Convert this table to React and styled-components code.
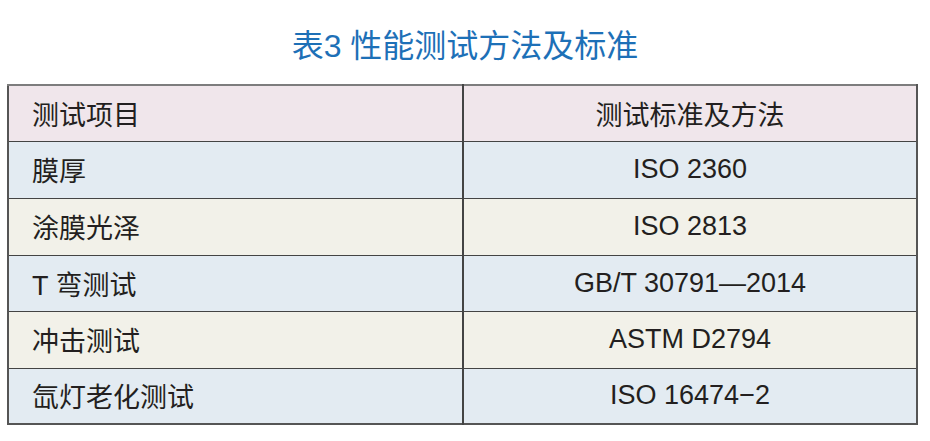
import React from "react";
import styled, { createGlobalStyle } from "styled-components";

const Global = createGlobalStyle`
  html, body { margin: 0; padding: 0; background: #ffffff; }
  body { font-family: "Liberation Sans", "Noto Sans CJK SC", sans-serif; }
`;

const Page = styled.div`
  width: 930px;
  height: 441px;
  background: #fff;
  display: flex;
  flex-direction: column;
  align-items: stretch;
`;

const Title = styled.h1`
  margin: 0;
  padding-top: 27px;
  height: 84px;
  flex-shrink: 0;
  box-sizing: border-box;
  text-align: center;
  font-family: "Liberation Sans", "Noto Sans CJK SC", sans-serif;
  font-weight: 400;
  font-size: 32px;
  line-height: 38px;
  color: #1d70b7;
  letter-spacing: 0px;
`;

const Table = styled.table`
  margin-left: 7px;
  width: 911px;
  border-collapse: collapse;
  table-layout: fixed;
  border: 2px solid #555;
  border-top-color: #7d7d7d;
`;

const bgs = {
  head: "#f0e6eb",
  blue: "#e3ebf2",
  beige: "#f2f1e9",
};

const Row = styled.tr`
  height: ${(p) => p.$h}px;
  background: ${(p) => bgs[p.$tone]};
  border-top: 1px solid #444;
`;

const Cell = styled.td`
  padding: 0 0 0 ${(p) => (p.$center ? 0 : 23)}px;
  text-align: ${(p) => (p.$center ? "center" : "left")};
  vertical-align: middle;
  font-family: "Liberation Sans", "Noto Sans CJK SC", sans-serif;
  font-size: 27px;
  color: #231f20;
  border-right: ${(p) => (p.$divider ? "2px solid #444" : "none")};
  white-space: nowrap;
`;

const rows = [
  ["膜厚", "ISO 2360", "blue", 57],
  ["涂膜光泽", "ISO 2813", "beige", 57],
  ["T 弯测试", "GB/T 30791—2014", "blue", 56],
  ["冲击测试", "ASTM D2794", "beige", 57],
  ["氙灯老化测试", "ISO 16474−2", "blue", 56],
];

export default function App() {
  return (
    <Page>
      <Global />
      <Title>表3 性能测试方法及标准</Title>
      <Table>
        <colgroup>
          <col style={{ width: "455px" }} />
          <col />
        </colgroup>
        <tbody>
          <Row $tone="head" $h={56}>
            <Cell $divider>测试项目</Cell>
            <Cell $center>测试标准及方法</Cell>
          </Row>
          {rows.map(([a, b, tone, h]) => (
            <Row key={a} $tone={tone} $h={h}>
              <Cell $divider>{a}</Cell>
              <Cell $center>{b}</Cell>
            </Row>
          ))}
        </tbody>
      </Table>
    </Page>
  );
}
